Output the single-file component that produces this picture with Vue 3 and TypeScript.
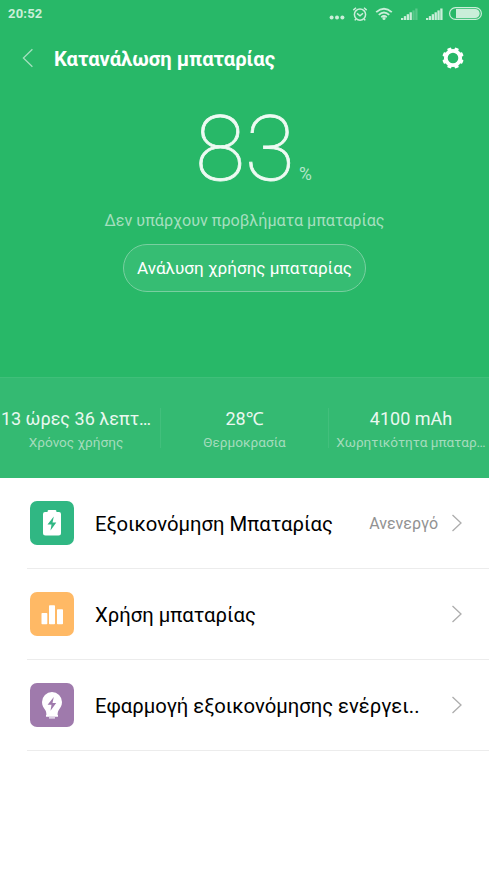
<script setup lang="ts">
interface Stat {
  value: string
  label: string
}

interface MenuItem {
  icon: 'saver' | 'usage' | 'bulb'
  title: string
  status?: string
}

const level = 83

const stats: Stat[] = [
  { value: '13 ώρες 36 λεπτ…', label: 'Χρόνος χρήσης' },
  { value: '28℃', label: 'Θερμοκρασία' },
  { value: '4100 mAh', label: 'Χωρητικότητα μπαταρ…' },
]

const items: MenuItem[] = [
  { icon: 'saver', title: 'Εξοικονόμηση Μπαταρίας', status: 'Ανενεργό' },
  { icon: 'usage', title: 'Χρήση μπαταρίας' },
  { icon: 'bulb', title: 'Εφαρμογή εξοικονόμησης ενέργει..' },
]

const signalBars = [0, 1, 2, 3, 4, 5]
</script>

<template>
  <main class="screen">
    <section class="hero">
      <div class="status-bar">
        <span class="clock">20:52</span>
        <div class="status-icons">
          <svg class="dots" width="16" height="14" viewBox="0 0 16 14">
            <circle cx="2.6" cy="10.4" r="2" /><circle cx="8" cy="10.4" r="2" /><circle cx="13.4" cy="10.4" r="2" />
          </svg>
          <svg class="alarm" width="16" height="16" viewBox="0 0 16 16">
            <circle cx="8" cy="8.6" r="5.6" />
            <path d="M5 7.4 8 9.8 11 7.2M1.3 4.1 4 1.7M14.7 4.1 12 1.7M3.9 13 2.8 14.4M12.1 13l1.1 1.4" />
          </svg>
          <svg class="wifi" width="18" height="14" viewBox="0 0 18 14">
            <path d="M1.2 5.1Q9-1.7 16.8 5.1M3.8 7.9Q9 3.3 14.2 7.900M6.3 10.2Q9 8 11.7 10.2" />
            <circle cx="9" cy="11.6" r="1.5" />
          </svg>
          <svg class="signal first" width="17" height="12" viewBox="0 0 17 12">
            <rect v-for="n in signalBars" :key="n" :x="n * 2.85" :y="10 - n * 1.9" width="2.3" :height="2 + n * 1.9" :opacity="n > 3 ? 0.3 : 1" />
          </svg>
          <svg class="signal second" width="17" height="12" viewBox="0 0 17 12">
            <rect v-for="n in signalBars" :key="n" :x="n * 2.85" :y="10 - n * 1.9" width="2.3" :height="2 + n * 1.9" />
          </svg>
          <svg class="battery" width="33" height="13" viewBox="0 0 33 13">
            <rect class="shell" x=".6" y=".6" width="31.8" height="11.8" rx="5.9" />
            <path d="M7 2h19.2a4.5 4.5 0 0 1 0 9H7z" />
          </svg>
        </div>
      </div>

      <header class="title-bar">
        <svg class="back" width="12" height="20" viewBox="0 0 12 20"><path d="M10.4 1.2 1.4 10l9 8.8" /></svg>
        <h1>Κατανάλωση μπαταρίας</h1>
        <svg class="gear" width="22" height="22" viewBox="-11 -11 22 22">
          <circle r="7.2" />
          <g>
            <rect v-for="n in 8" :key="n" x="-2.1" y="-10.7" width="4.2" height="4.2" rx="1" :transform="`rotate(${n * 45 + 22.5})`" />
          </g>
        </svg>
      </header>

      <div class="level"><span class="number">{{ level }}</span><span class="percent">%</span></div>
      <p class="message">Δεν υπάρχουν προβλήματα μπαταρίας</p>
      <button class="analyse">Ανάλυση χρήσης μπαταρίας</button>

      <div class="stats">
        <div v-for="stat in stats" :key="stat.label" class="stat">
          <span class="value">{{ stat.value }}</span>
          <span class="label">{{ stat.label }}</span>
        </div>
      </div>
    </section>

    <ul class="menu">
      <li v-for="item in items" :key="item.icon">
        <span class="tile" :class="item.icon">
          <svg v-if="item.icon === 'saver'" width="44" height="44" viewBox="0 0 44 44">
            <path fill="#fff" d="M18.500 9h7q1 0 1 2H29q2 0 2 2v19q0 2.500-2.500 2.500h-13Q13 34.500 13 32V13q0-2 2-2h2.500q0-2 1-2z" />
            <path fill="#30b783" d="m23.800 15.500-6.300 8h4l-1 6 5.800-8h-3.800z" />
          </svg>
          <svg v-else-if="item.icon === 'usage'" width="44" height="44" viewBox="0 0 44 44" fill="#fff">
            <rect x="11.500" y="21" width="5.800" height="11.300" rx=".8" />
            <rect x="19" y="13.200" width="6" height="19.100" rx=".8" />
            <rect x="27" y="17.200" width="6" height="15.100" rx=".8" />
          </svg>
          <svg v-else width="44" height="44" viewBox="0 0 44 44">
            <path fill="#fff" d="M22 9a10 10 0 0 1 10 10c0 3.500-1.600 5.600-3.200 8-.9 1.400-1.200 3-1.200 5h.4v1.800H16V32h.4c0-2-.3-3.600-1.200-5-1.600-2.400-3.200-4.500-3.200-8A10 10 0 0 1 22 9z" />
            <path fill="#ddd0e3" d="M19 33.800h6v1.900h-6z" />
            <path fill="#9f7aac" d="m23.800 14-6.200 7.800h3.900l-1 6 5.700-7.700h-3.700z" />
          </svg>
        </span>
        <span class="title">{{ item.title }}</span>
        <span v-if="item.status" class="status">{{ item.status }}</span>
        <svg class="chevron" width="12" height="18" viewBox="0 0 12 18"><path d="M1.500 1 10 9l-8.500 8" /></svg>
      </li>
    </ul>
  </main>
</template>

<style>
body {
  background: #fff;
}
</style>

<style scoped>
* {
  box-sizing: border-box;
}

.screen {
  width: 489px;
  height: 869px;
  overflow: hidden;
  background: #fff;
  font-family: Roboto, "Noto Sans", sans-serif;
}

.hero {
  display: flex;
  flex-direction: column;
  align-items: center;
  height: 478px;
  background: #28b868;
  color: #fff;
}

.status-bar {
  display: flex;
  justify-content: space-between;
  width: 100%;
  height: 28px;
  padding: 0 7px 0 8px;
  color: #caeed9;
}

.clock {
  font-size: 13px;
  font-weight: 700;
  line-height: 28px;
  letter-spacing: 0.2px;
}

.status-icons {
  display: flex;
  align-items: center;
  height: 27px;
  fill: #caeed9;
}

.dots {
  margin: 0 7px 0 0;
}

.alarm,
.wifi {
  stroke: #caeed9;
  stroke-width: 1.5;
}

.alarm,
.wifi path {
  fill: none;
}

.wifi {
  margin-left: 7px;
  stroke-width: 1.9;
}

.wifi circle {
  stroke: none;
}

.first {
  margin-left: 8px;
}

.second {
  margin: 0 6px 0 8px;
}

.shell {
  fill: none;
  stroke: #caeed9;
  stroke-width: 1.2;
}

.title-bar {
  display: flex;
  align-items: center;
  width: 100%;
  height: 60px;
  padding: 0 25px 0 22px;
}

.back {
  fill: none;
  stroke: #a5e0bf;
  stroke-width: 1.3;
}

h1 {
  flex: 1;
  margin: 2px 0 0 20px;
  font-size: 20.2px;
  font-weight: 700;
  line-height: 26px;
}

.gear circle {
  fill: none;
  stroke: #fff;
  stroke-width: 3.8;
}

.gear g {
  fill: #fff;
}

.level {
  display: flex;
  align-items: baseline;
  height: 108px;
  margin: 8px 0 0 18px;
  color: #eefaf3;
}

.number {
  font-size: 91px;
  font-weight: 100;
  line-height: 107px;
  -webkit-text-stroke: 0.8px #eefaf3;
}

.percent {
  margin-left: 4px;
  font-size: 17.5px;
  font-weight: 400;
  line-height: 20px;
  color: #b5e6ca;
}

.message {
  margin: 7px 0 0;
  font-size: 16.15px;
  line-height: 20px;
  color: #a5dfbf;
}

.analyse {
  width: 243px;
  height: 48px;
  margin: 13px 0 0;
  padding: 0;
  border: 1px solid #79cfa0;
  border-radius: 24px;
  background: #36bd73;
  color: #fff;
  font: 17.15px/46px Roboto, "Noto Sans", sans-serif;
  white-space: nowrap;
}

.stats {
  display: grid;
  grid-template-columns: 161px 168px 160px;
  width: 100%;
  height: 101px;
  margin-top: auto;
  padding-top: 30px;
  border-top: 1px solid #3fbf79;
  background: #34ba72;
}

.stat {
  display: flex;
  flex-direction: column;
  align-items: center;
  height: 40px;
  border-right: 1px solid #42bf7c;
  white-space: nowrap;
}

.stat:first-child {
  padding-right: 8px;
}

.stat:last-child {
  padding-left: 4px;
  border-right: 0;
}

.value {
  font-size: 18px;
  line-height: 21px;
  color: #eaf8f0;
}

.label {
  margin-top: 5px;
  font-size: 13.6px;
  line-height: 16px;
  color: #a4dcbd;
}

.menu {
  margin: 0;
  padding: 0 0 0 27px;
  list-style: none;
}

li {
  display: flex;
  align-items: center;
  height: 91px;
  padding: 0 26px 0 3px;
  border-bottom: 1px solid #ececec;
}

.tile {
  flex: none;
  width: 44px;
  height: 44px;
  border-radius: 7px;
}

.tile svg {
  display: block;
}

.saver {
  background: #30b783;
}

.usage {
  background: #ffb965;
}

.bulb {
  background: #9f7aac;
}

.title {
  flex: 1;
  margin: 2px 0 0 21px;
  font-size: 20.27px;
  line-height: 26px;
  color: #000;
  white-space: nowrap;
}

.status {
  margin: 1px 13px 0 0;
  font-size: 16px;
  color: #929292;
}

.chevron {
  flex: none;
  fill: none;
  stroke: #adadad;
  stroke-width: 1.3;
}
</style>
